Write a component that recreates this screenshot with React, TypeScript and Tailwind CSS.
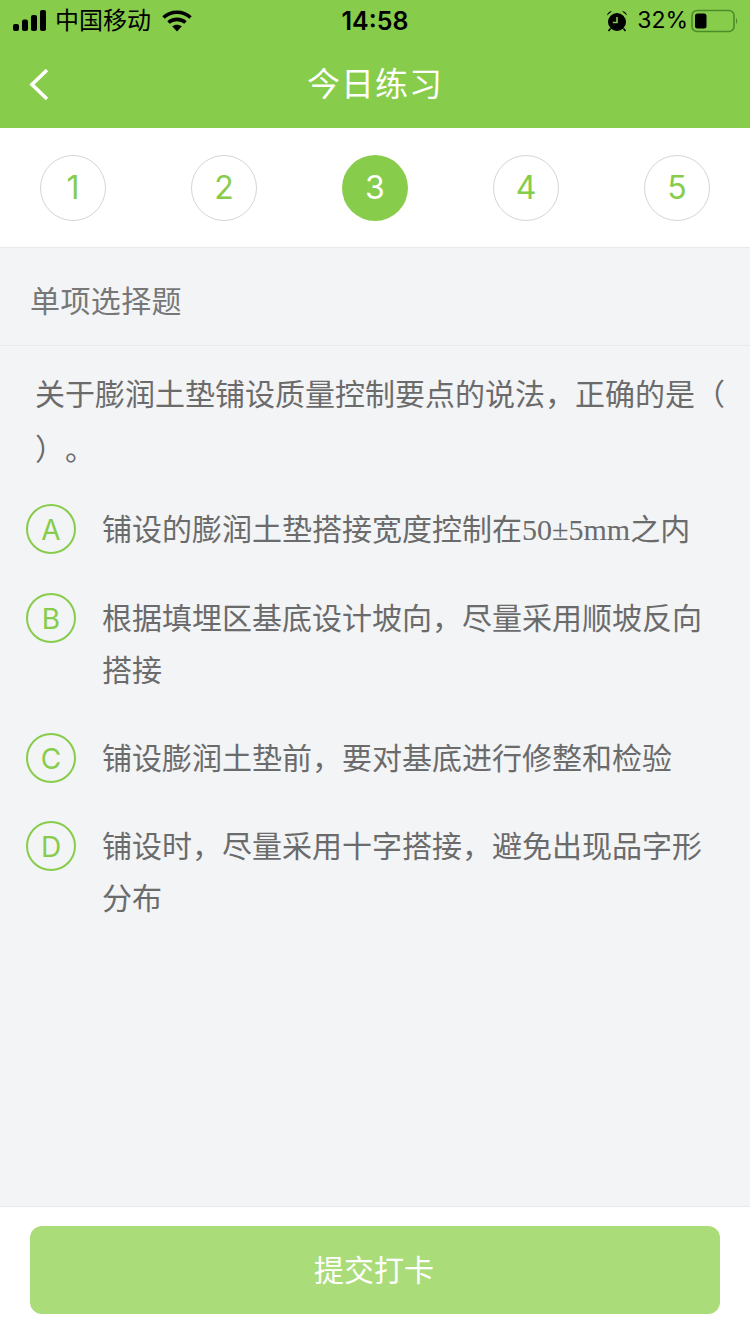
const sans = "font-['Inter','Noto_Sans_CJK_SC',sans-serif]";

function Signal() {
  return (
    <svg width="34" height="21" viewBox="0 0 34 21" fill="#000">
      <rect x="0" y="14" width="6" height="7" rx="2" />
      <rect x="9" y="9.5" width="6" height="11.5" rx="2" />
      <rect x="18" y="5" width="6" height="16" rx="2" />
      <rect x="27" y="0" width="6" height="21" rx="2" />
    </svg>
  );
}

function Wifi() {
  return (
    <svg width="30" height="22" viewBox="0 0 30 22" fill="none" stroke="#000" strokeWidth="3.6">
      <path d="M1.5 7.5C9 0.5 21 0.5 28.5 7.5" />
      <path d="M6.5 12.5C11 8.3 19 8.3 23.5 12.5" />
      <path d="M15 21.5L10.2 16.3C12.8 14.2 17.2 14.2 19.8 16.3Z" fill="#000" stroke="none" />
    </svg>
  );
}

function Alarm() {
  return (
    <svg width="22" height="22" viewBox="0 0 22 22">
      <circle cx="11" cy="12" r="9" fill="#000" />
      <path d="M11 7V12.5H6.8" stroke="#87cc4b" strokeWidth="1.6" fill="none" />
      <path d="M1 5.5C1.5 2.8 3.5 1 6 1.2ZM21 5.5C20.5 2.8 18.5 1 16 1.2Z" fill="#000" />
      <path d="M4.5 18.5L2.5 21M17.5 18.5L19.5 21" stroke="#000" strokeWidth="1.6" />
    </svg>
  );
}

function Battery() {
  return (
    <svg width="48" height="24" viewBox="0 0 48 24">
      <rect x="1" y="1.5" width="42" height="21" rx="5" fill="none" stroke="#4d8a2a" strokeWidth="1.6" />
      <rect x="4" y="4.5" width="11.5" height="15" rx="2.5" fill="#000" />
      <path d="M45 9C46.5 10 46.5 14 45 15Z" fill="#4d8a2a" />
    </svg>
  );
}

function Step({ n, active }: { n: number; active?: boolean }) {
  return (
    <div
      className={
        active
          ? "flex h-[66px] w-[66px] items-center justify-center rounded-full bg-[#87cc4b] text-[32px] text-white"
          : "flex h-[66px] w-[66px] items-center justify-center rounded-full border border-[#d5d5d5] bg-white text-[32px] text-[#87cc4b]"
      }
    >
      {n}
    </div>
  );
}

function Option({ letter, children }: { letter: string; children: React.ReactNode }) {
  return (
    <div className="flex items-start">
      <div className="mt-[1px] flex h-[50px] w-[50px] shrink-0 items-center justify-center rounded-full border-2 border-[#87cc4b] pt-[2px] text-[28px] text-[#87cc4b]">
        {letter}
      </div>
      <div className="ml-[26px] w-[620px] text-[30px] leading-[52px] text-[#6b6b6b]">{children}</div>
    </div>
  );
}

export default function App() {
  return (
    <div className={`flex h-[1334px] w-[750px] flex-col overflow-hidden bg-[#f3f4f6] ${sans}`}>
      <header className="h-[128px] shrink-0 bg-[#87cc4b]">
        <div className="relative flex h-[40px] items-center justify-between pl-[13px] pr-[11px] pt-[1px] text-black">
          <div className="flex items-center">
            <Signal />
            <span className="ml-[8px] text-[24px]">中国移动</span>
            <span className="ml-[11px] flex"><Wifi /></span>
          </div>
          <div className="absolute left-0 right-0 top-[6px] text-center text-[25px] font-semibold leading-[30px]">14:58</div>
          <div className="flex items-center">
            <Alarm />
            <span className="ml-[9px] text-[23px]">32%</span>
            <span className="ml-[3px] flex"><Battery /></span>
          </div>
        </div>
        <div className="relative flex h-[88px] items-center justify-center pt-[2px] text-[33px] tracking-[1px] text-white">
          今日练习
          <svg className="absolute left-[28px] top-[28px]" width="22" height="34" viewBox="0 0 22 34" fill="none" stroke="#fff" strokeWidth="3.6">
            <path d="M19 2L4 16.5L19 31" />
          </svg>
        </div>
      </header>

      <nav className="flex h-[120px] shrink-0 items-center justify-between border-b border-[#e8e9eb] bg-white px-[40px]">
        <Step n={1} />
        <Step n={2} />
        <Step n={3} active />
        <Step n={4} />
        <Step n={5} />
      </nav>

      <div className="flex h-[98px] shrink-0 items-center border-b border-[#e8e9eb] pl-[30px] pt-[10px] text-[30px] tracking-[0.4px] text-[#777777]">
        单项选择题
      </div>

      <main className="flex-1 pl-[26px] pr-[25px] pt-[21px]">
        <p className="pl-[9px] text-[30px] leading-[55px] text-[#6b6b6b] [text-spacing-trim:space-all]">
          关于膨润土垫铺设质量控制要点的说法，正确的是（
          <br />
          ）。
        </p>
        <div className="mt-[26px] flex flex-col gap-[36px]">
          <Option letter="A">
            铺设的膨润土垫搭接宽度控制在<span className="font-['Liberation_Serif',serif]">50±5mm</span>之内
          </Option>
          <Option letter="B">根据填埋区基底设计坡向，尽量采用顺坡反向搭接</Option>
          <Option letter="C">铺设膨润土垫前，要对基底进行修整和检验</Option>
          <Option letter="D">铺设时，尽量采用十字搭接，避免出现品字形分布</Option>
        </div>
      </main>

      <footer className="h-[128px] shrink-0 border-t border-[#e8e9eb] bg-white px-[30px] pt-[19px]">
        <button className="flex h-[88px] w-full items-center justify-center rounded-[12px] bg-[#aadc7a] pr-[2px] text-[30px] text-white">
          提交打卡
        </button>
      </footer>
    </div>
  );
}
